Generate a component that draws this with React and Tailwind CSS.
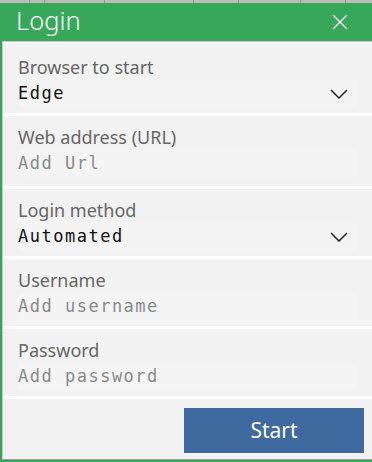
import React from "react";

const label = "text-[18px] leading-[22px] text-[#666666]";
const mono = "font-['DejaVu_Sans_Mono',monospace] text-[17px] tracking-[1.5px]";

function Chevron(){
  return (
    <svg width="18" height="10" viewBox="0 0 18 10" className="shrink-0">
      <path d="M1 1 L9 9 L17 1" fill="none" stroke="#222" strokeWidth="1.5"/>
    </svg>
  );
}

function Field({title, value, placeholder, select, h, pt="pt-[10px]"}){
  return (
    <div className={`bg-[#f2f2f2] pl-[15px] ${pt} ${h}`}>
      <div className={label}>{title}</div>
      <div className="mt-[2px] h-[27px] w-[339px] rounded-[4px] bg-[#f4f4f4] flex items-center justify-between pr-[9px]">
        <span className={`${mono} ${value ? "text-[#111]" : "text-[#8a8a8a]"}`}>{value || placeholder}</span>
        {select && <Chevron/>}
      </div>
    </div>
  );
}

export default function App(){
  const ticks=[29,44,104,193,238,300,345];
  return (
    <div className="w-[372px] h-[462px] flex flex-col bg-[#bdbdbd] font-['Noto_Sans',sans-serif] overflow-hidden">
      <svg width="372" height="3" className="block shrink-0">
        {ticks.map(x=><rect key={x} x={x} y="0" width="1" height="3" fill="#9a9a9a"/>)}
      </svg>
      <div className="flex-1 flex flex-col bg-[#37a75a] pl-[2px] pb-[2px]">
        <div className="h-[38px] flex items-center justify-between pl-[14px] pr-[24px] text-white">
          <span className="text-[25.5px] font-light leading-none -mt-[2px]">Login</span>
          <svg width="16" height="16" viewBox="0 0 16 16">
            <path d="M1 1 L15 15 M15 1 L1 15" stroke="#fff" strokeWidth="1.4"/>
          </svg>
        </div>
        <div className="flex-1 flex flex-col bg-white border-t border-l border-[#c8c8c8] border-b-[#a0a0a0] border-b pt-[1px]">
          <div className="flex flex-col gap-[3px]">
            <Field h="h-[70px]" pt="pt-[13px]" title="Browser to start" value="Edge" select/>
            <Field h="h-[70px]" title="Web address (URL)" placeholder="Add Url"/>
            <Field h="h-[67px]" title="Login method" value="Automated" select/>
            <Field h="h-[67px]" title="Username" placeholder="Add username"/>
            <Field h="h-[67px]" title="Password" placeholder="Add password"/>
          </div>
          <div className="flex-1 mt-[3px] bg-[#f2f2f2] flex justify-end items-start pt-[9px] pr-[8px]">
            <button className="w-[180px] h-[45px] bg-[#3e6aa0] text-white text-[21px] leading-none">Start</button>
          </div>
        </div>
      </div>
    </div>
  );
}
